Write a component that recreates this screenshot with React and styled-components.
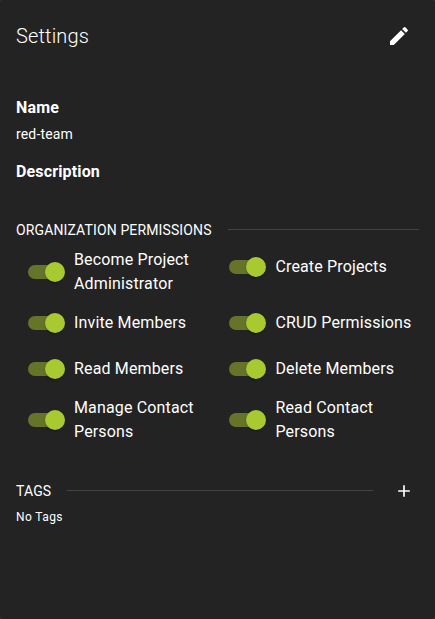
import styled, { createGlobalStyle } from 'styled-components';

const permissions = [
	'Become Project Administrator',
	'Create Projects',
	'Invite Members',
	'CRUD Permissions',
	'Read Members',
	'Delete Members',
	'Manage Contact Persons',
	'Read Contact Persons',
];

const App = () => {
	return (
		<>
			<GlobalStyle />
			<Panel>
				<Header>
					<Title>Settings</Title>
					<IconButton aria-label="Edit" $size={24} $pad={8}>
						<svg viewBox="0 0 24 24">
							<path d="M3 17.25V21h3.75L17.81 9.94l-3.75-3.75L3 17.25zM20.71 7.04c.39-.39.39-1.02 0-1.41l-2.34-2.34a.9959.9959 0 0 0-1.41 0l-1.83 1.83 3.75 3.75 1.83-1.83z" />
						</svg>
					</IconButton>
				</Header>

				<Details>
					<Label>Name</Label>
					<Value>red-team</Value>
					<Label>Description</Label>
				</Details>

				<SectionHead>
					<SectionTitle>Organization Permissions</SectionTitle>
					<Line />
				</SectionHead>
				<PermissionGrid>
					{permissions.map((name) => (
						<Permission key={name}>
							<Switch role="switch" aria-checked="true" aria-label={name}>
								<Thumb />
							</Switch>
							<PermissionName>{name}</PermissionName>
						</Permission>
					))}
				</PermissionGrid>

				<TagsHead>
					<SectionTitle>Tags</SectionTitle>
					<Line />
					<IconButton aria-label="Add tag" $size={20} $pad={5}>
						<svg viewBox="0 0 24 24">
							<path d="M19 13h-6v6h-2v-6H5v-2h6V5h2v6h6v2z" />
						</svg>
					</IconButton>
				</TagsHead>
				<NoTags>No Tags</NoTags>
			</Panel>
		</>
	);
};

const GlobalStyle = createGlobalStyle`
	* {
		box-sizing: border-box;
	}

	body {
		margin: 0;
		background: #303030;
		color: #fff;
		font-family: Roboto, "Liberation Sans", sans-serif;
	}
`

const Panel = styled.div`
	height: 100vh;
	padding: 16px;
	border-radius: 4px;
	background: #232323;
	overflow: hidden;
`

const Header = styled.div`
	display: flex;
	align-items: center;
	justify-content: space-between;
	height: 40px;
`

const Title = styled.h2`
	margin: 0;
	font-size: 20px;
	font-weight: 300;
	line-height: 32px;
	letter-spacing: 0.15px;
`

const IconButton = styled.button`
	display: flex;
	flex: none;
	padding: ${(props) => props.$pad}px;
	border: 0;
	background: none;
	color: #fff;

	svg {
		width: ${(props) => props.$size}px;
		height: ${(props) => props.$size}px;
		fill: currentColor;
	}
`

const Details = styled.div`
	height: 120px;
	margin-top: 40px;
`

const Label = styled.div`
	font-size: 16px;
	font-weight: 700;
	line-height: 24px;
	letter-spacing: 0.15px;
`

const Value = styled.div`
	margin: 4px 0 15px;
	font-size: 14px;
	line-height: 21px;
	letter-spacing: 0.15px;
`

const SectionHead = styled.div`
	display: flex;
	align-items: center;
	gap: 16px;
	height: 28px;
`

const TagsHead = styled(SectionHead)`
	height: 30px;
	margin-top: 32px;
`

const SectionTitle = styled.div`
	font-size: 14px;
	line-height: 20px;
	letter-spacing: 0.13px;
	text-transform: uppercase;
`

const Line = styled.div`
	flex: 1;
	height: 1px;
	margin-bottom: 1px;
	background: #434343;
`

const PermissionGrid = styled.div`
	display: grid;
	grid-template-columns: 201.4px 1fr;
	align-items: start;
	row-gap: 8px;
	margin-top: 4px;
`

const Permission = styled.div`
	display: flex;
	align-items: center;
	padding-right: 4px;
`

const Switch = styled.div`
	display: flex;
	flex: none;
	align-items: center;
	justify-content: flex-end;
	width: 58px;
	height: 38px;
	padding: 12px;

	&::before {
		content: "";
		width: 34px;
		height: 14px;
		margin-right: -17px;
		border-radius: 7px;
		background: #667429;
	}
`

const Thumb = styled.span`
	flex: none;
	width: 20px;
	height: 20px;
	margin-right: -3px;
	border-radius: 50%;
	background: #a9c931;
	box-shadow: 0 2px 1px -1px rgba(0, 0, 0, 0.2), 0 1px 1px rgba(0, 0, 0, 0.14), 0 1px 3px rgba(0, 0, 0, 0.12);
	z-index: 1;
`

const PermissionName = styled.div`
	font-size: 16px;
	line-height: 24px;
	letter-spacing: 0.15px;
`

const NoTags = styled.div`
	margin-top: 1px;
	font-size: 12px;
	line-height: 20px;
	letter-spacing: 0.4px;
`

export default App
